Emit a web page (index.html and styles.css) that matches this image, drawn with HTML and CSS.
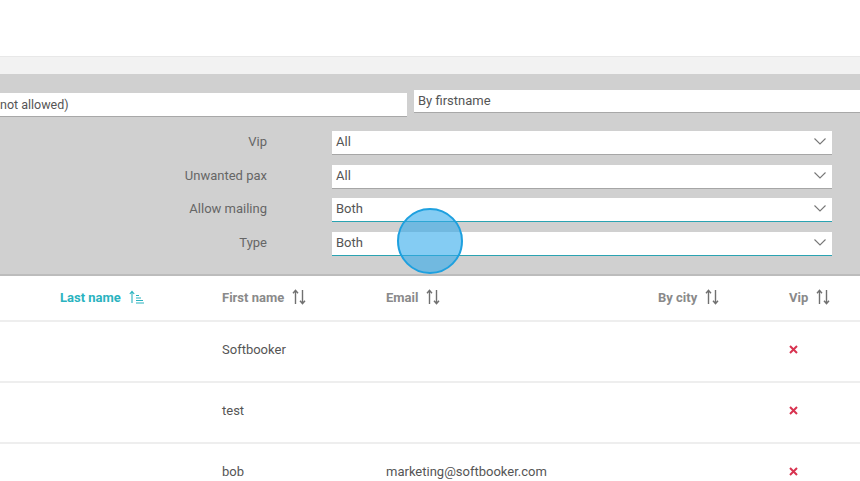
FILE: index.html
```html
<!DOCTYPE html>
<html>
<head>
<meta charset="utf-8">
<link rel="stylesheet" href="styles.css">
</head>
<body>
<div class="page">
  <div class="top"></div>
  <div class="subbar"></div>
  <div class="panel">
    <div class="search-row">
      <div class="input left-input">not allowed)</div>
      <div class="input right-input">By firstname</div>
    </div>
    <div class="filters">
      <div class="label">Vip</div>
      <div class="select">All<svg class="chev" viewBox="0 0 12 7" width="12" height="7"><polyline points="0.5,0.5 6,6 11.5,0.5"/></svg></div>
      <div class="label">Unwanted pax</div>
      <div class="select">All<svg class="chev" viewBox="0 0 12 7" width="12" height="7"><polyline points="0.5,0.5 6,6 11.5,0.5"/></svg></div>
      <div class="label">Allow mailing</div>
      <div class="select active">Both<svg class="chev" viewBox="0 0 12 7" width="12" height="7"><polyline points="0.5,0.5 6,6 11.5,0.5"/></svg></div>
      <div class="label">Type</div>
      <div class="select active">Both<svg class="chev" viewBox="0 0 12 7" width="12" height="7"><polyline points="0.5,0.5 6,6 11.5,0.5"/></svg></div>
    </div>
  </div>
  <div class="table">
    <div class="row head">
      <div class="th sorted">Last name
        <svg class="sort" viewBox="0 0 16 14" width="16" height="14"><path d="M3 13V1.5M0.8 4L3 1.3 5.2 4" /><path d="M7 5.5h3M7 8h5M7 10.5h7M7 13h8" /></svg>
      </div>
      <div class="th">First name
        <svg class="sort" viewBox="0 0 14 16" width="14" height="16"><path d="M3.5 15V1.5M1 4.2L3.5 1.3 6 4.2M10.5 1v13.5M8 11.8l2.5 2.9 2.5-2.9"/></svg>
      </div>
      <div class="th">Email
        <svg class="sort" viewBox="0 0 14 16" width="14" height="16"><path d="M3.5 15V1.5M1 4.2L3.5 1.3 6 4.2M10.5 1v13.5M8 11.8l2.5 2.9 2.5-2.9"/></svg>
      </div>
      <div class="th">By city
        <svg class="sort" viewBox="0 0 14 16" width="14" height="16"><path d="M3.5 15V1.5M1 4.2L3.5 1.3 6 4.2M10.5 1v13.5M8 11.8l2.5 2.9 2.5-2.9"/></svg>
      </div>
      <div class="th">Vip
        <svg class="sort" viewBox="0 0 14 16" width="14" height="16"><path d="M3.5 15V1.5M1 4.2L3.5 1.3 6 4.2M10.5 1v13.5M8 11.8l2.5 2.9 2.5-2.9"/></svg>
      </div>
    </div>
    <div class="row">
      <div class="td"></div>
      <div class="td">Softbooker</div>
      <div class="td"></div>
      <div class="td"></div>
      <div class="td"><svg class="x" viewBox="0 0 9 9" width="9" height="9"><path d="M1 1l7 7M8 1L1 8"/></svg></div>
    </div>
    <div class="row">
      <div class="td"></div>
      <div class="td">test</div>
      <div class="td"></div>
      <div class="td"></div>
      <div class="td"><svg class="x" viewBox="0 0 9 9" width="9" height="9"><path d="M1 1l7 7M8 1L1 8"/></svg></div>
    </div>
    <div class="row">
      <div class="td"></div>
      <div class="td">bob</div>
      <div class="td">marketing@softbooker.com</div>
      <div class="td"></div>
      <div class="td"><svg class="x" viewBox="0 0 9 9" width="9" height="9"><path d="M1 1l7 7M8 1L1 8"/></svg></div>
    </div>
  </div>
  <div class="touch"></div>
</div>
</body>
</html>
```

FILE: styles.css
```css
* { box-sizing: border-box; }
html, body { margin: 0; padding: 0; }
body {
  font-family: Roboto, "Liberation Sans", sans-serif;
  color: #555;
  background: #fff;
  width: 860px;
  height: 481px;
  overflow: hidden;
}
.page { position: relative; height: 481px; overflow: hidden; }
.top {
  height: 57px;
  background: #fff;
  border-bottom: 1px solid #e8e8e8;
}
.subbar {
  height: 17px;
  background: #f2f2f2;
}
.panel {
  background: #d0d0d0;
  padding: 16px 0 18px 0;
  border-bottom: 2px solid #bcbcbc;
}
.search-row {
  display: flex;
  align-items: flex-start;
  gap: 7px;
}
.input {
  background: #fff;
  border-bottom: 1px solid #a8a8a8;
  font-size: 13px;
  color: #555;
  height: 24px;
  line-height: 23px;
  white-space: nowrap;
  overflow: hidden;
}
.left-input {
  width: 407px;
  margin-top: 3px;
  font-size: 12.5px;
  padding-left: 0;
}
.right-input {
  flex: 1;
  height: 23px;
  line-height: 21px;
  padding-left: 4px;
}
.filters {
  display: grid;
  grid-template-columns: 267px 500px;
  column-gap: 65px;
  row-gap: 9.67px;
  margin-top: 14px;
  align-items: center;
}
.label {
  text-align: right;
  font-size: 13px;
  color: #666;
  padding-bottom: 3px;
}
.select {
  position: relative;
  background: #fff;
  height: 24px;
  font-size: 13px;
  color: #555;
  padding: 0 6px 2px 4px;
  border-bottom: 1px solid #a6a6a6;
  display: flex;
  align-items: center;
  justify-content: space-between;
}
.select.active { border-bottom-color: #2aa3b2; }
.chev {
  fill: none;
  stroke: #777;
  stroke-width: 1.1;
}
.table { background: #fff; }
.row {
  display: grid;
  grid-template-columns: 162px 164px 272px 131px 1fr;
  padding-left: 60px;
  height: 61px;
  align-items: center;
  border-bottom: 2px solid #eeeeee;
  font-size: 13px;
  color: #555;
}
.row .td { padding-bottom: 3px; }
.row.head {
  height: 46px;
  padding-bottom: 1px;
}
.th {
  font-weight: 700;
  font-size: 13px;
  color: #8a8a8a;
  display: flex;
  align-items: center;
  gap: 8px;
}
.th.sorted { color: #2ab3c0; }
.sort {
  fill: none;
  stroke: #707070;
  stroke-width: 1.4;
}
.th.sorted .sort {
  stroke: #2ab3c0;
  stroke-width: 1.1;
}
.x {
  fill: none;
  stroke: #d83350;
  stroke-width: 2;
}
.touch {
  position: absolute;
  left: 397px;
  top: 208px;
  width: 66px;
  height: 66px;
  border-radius: 50%;
  background: rgba(50, 170, 235, 0.6);
  border: 2px solid #1ea0df;
}
```
